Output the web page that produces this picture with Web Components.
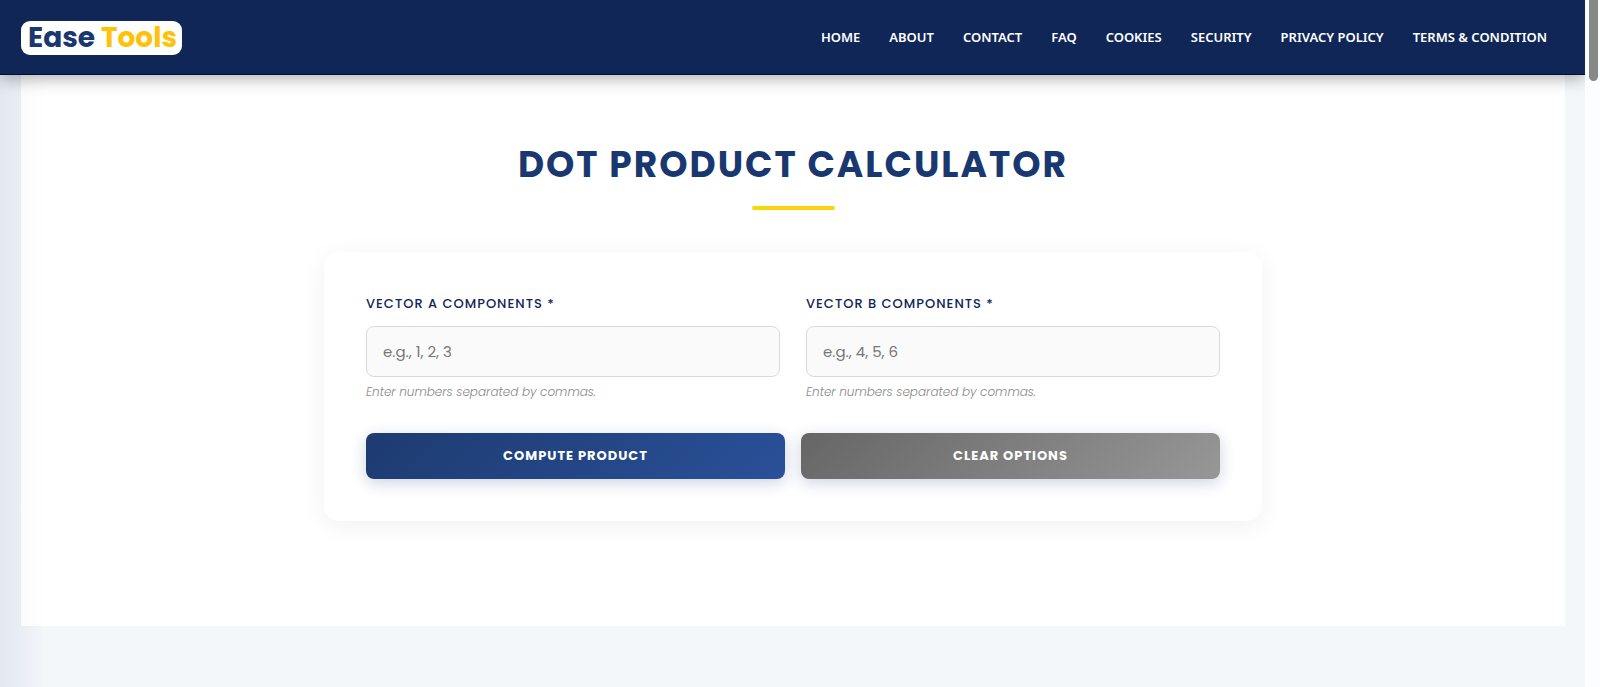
<!DOCTYPE html>
<html lang="en">
<head>
<meta charset="utf-8">
<meta name="viewport" content="width=device-width, initial-scale=1">
<title>Dot Product Calculator</title>
<style>
html, body { height: 100%; }
body { margin: 0; background: #fcfdfe; overflow: hidden; font-family: Poppins, Inter, sans-serif; }
</style>
</head>
<body>
<tool-page>
  <site-header slot="header">
    <a slot="link" href="#home">HOME</a>
    <a slot="link" href="#about">ABOUT</a>
    <a slot="link" href="#contact">CONTACT</a>
    <a slot="link" href="#faq">FAQ</a>
    <a slot="link" href="#cookies">COOKIES</a>
    <a slot="link" href="#security">SECURITY</a>
    <a slot="link" href="#privacy">PRIVACY POLICY</a>
    <a slot="link" href="#terms">TERMS &amp; CONDITION</a>
  </site-header>
  <page-title>DOT PRODUCT CALCULATOR</page-title>
  <calculator-card>
    <vector-field slot="field" label="VECTOR A COMPONENTS *" placeholder="e.g., 1, 2, 3">Enter numbers separated by commas.</vector-field>
    <vector-field slot="field" label="VECTOR B COMPONENTS *" placeholder="e.g., 4, 5, 6">Enter numbers separated by commas.</vector-field>
    <action-button slot="action">COMPUTE PRODUCT</action-button>
    <action-button slot="action" class="muted">CLEAR OPTIONS</action-button>
  </calculator-card>
</tool-page>
<script>
function define(name, html, setup) {
  const template = document.createElement('template');
  template.innerHTML = html;
  customElements.define(name, class extends HTMLElement {
    constructor() {
      super();
      this.attachShadow({ mode: 'open' }).append(template.content.cloneNode(true));
    }
    connectedCallback() { if (setup) setup(this, this.shadowRoot); }
  });
}

define('tool-page', `
  <style>
    :host { display: flex; height: 100%; }
    .view { flex: 1; min-width: 0; overflow: hidden; display: flex; flex-direction: column;
      background: linear-gradient(90deg, #e3e7f0 0, #e9edf4 20px, #f3f7fa 44px); }
    main { margin: 0 20px 0 21px; padding: 62px 20px 105px; background: linear-gradient(90deg, #fafbfb, #fff 24px); }
    .rail { width: 15px; box-sizing: border-box; padding: 0 2px 0 4px; }
    .thumb { height: 81px; border-radius: 0 0 5px 5px; background: #868986; }
  </style>
  <div class="view">
    <slot name="header"></slot>
    <main><slot></slot></main>
  </div>
  <div class="rail"><div class="thumb"></div></div>
`);

define('site-header', `
  <style>
    :host { display: flex; align-items: center; justify-content: space-between; position: relative;
      box-sizing: border-box; min-height: 75px; padding: 1px 38px 0 21px; background: #0f2657;
      border-bottom: 1px solid #060f2e; box-shadow: 0 4px 15px rgba(0,0,0,.3); }
    .logo { display: block; padding: 0 5px 0 7px; border-radius: 9px; background: #fff; color: #1a3870;
      font-size: 28px; line-height: 34px; font-weight: 700; text-decoration: none; white-space: nowrap; }
    .logo span { color: #ffc20a; }
    nav { display: flex; gap: 29px; padding-bottom: 2px; }
    ::slotted(a) { color: #fff; text-decoration: none; white-space: nowrap;
      font: 600 13px/20px "Segoe UI", "Noto Sans", sans-serif; }
  </style>
  <a class="logo" href="#home">Ease <span>Tools</span></a>
  <nav><slot name="link"></slot></nav>
`);

define('page-title', `
  <style>
    :host { display: flex; flex-direction: column; align-items: center; gap: 14px; margin-bottom: 42px; }
    h1 { margin: 0; color: #1a3870; font-size: 36px; line-height: 55px; font-weight: 700; letter-spacing: 2px; text-align: center; }
    .bar { width: 83px; height: 4px; border-radius: 2px; background: #fdd30c; }
  </style>
  <h1><slot></slot></h1>
  <div class="bar"></div>
`);

define('calculator-card', `
  <style>
    :host { display: block; box-sizing: border-box; max-width: 938px; margin: 0 auto; padding: 42px;
      border-radius: 15px; background: #fff; box-shadow: 0 5px 26px rgba(0,0,0,.06); }
    form { margin: 0; }
    .fields { display: grid; grid-template-columns: repeat(auto-fit, minmax(260px, 1fr)); gap: 26px; }
    .actions { display: flex; flex-wrap: wrap; gap: 16px; margin-top: 31px; }
    ::slotted(action-button) { flex: 1; }
  </style>
  <form>
    <div class="fields"><slot name="field"></slot></div>
    <div class="actions"><slot name="action"></slot></div>
  </form>
`);

define('vector-field', `
  <style>
    :host { display: flex; flex-direction: column; }
    label { margin-bottom: 12px; color: #0f2657; font-size: 13px; line-height: 20px; font-weight: 500; letter-spacing: 1px; }
    input { box-sizing: border-box; width: 100%; height: 51px; padding: 0 16px; border: 1px solid #d9dadb; border-radius: 8px;
      background: #fafafa; color: #333; font: 400 15px/24px Poppins, Inter, sans-serif; }
    input::placeholder { color: #777; opacity: 1; }
    small { margin-top: 5px; color: #888; font-size: 12px; line-height: 20px; font-style: italic; font-weight: 300; }
  </style>
  <label for="value"></label>
  <input id="value" type="text" aria-describedby="hint">
  <small id="hint"><slot></slot></small>
`, (host, root) => {
  root.querySelector('label').textContent = host.getAttribute('label');
  root.querySelector('input').placeholder = host.getAttribute('placeholder');
});

define('action-button', `
  <style>
    :host { display: block; --from: #1d3b70; --to: #2a5099; }
    :host(.muted) { --from: #666; --to: #979797; }
    button { display: block; width: 100%; height: 46px; padding: 0 16px; border: 0; border-radius: 8px; color: #fff;
      background: linear-gradient(135deg, var(--from), var(--to)); box-shadow: 0 4px 15px rgba(26,56,112,.22);
      font: 700 13px/20px Poppins, Inter, sans-serif; letter-spacing: 1px; cursor: pointer; }
  </style>
  <button type="button"><slot></slot></button>
`);
</script>
</body>
</html>
